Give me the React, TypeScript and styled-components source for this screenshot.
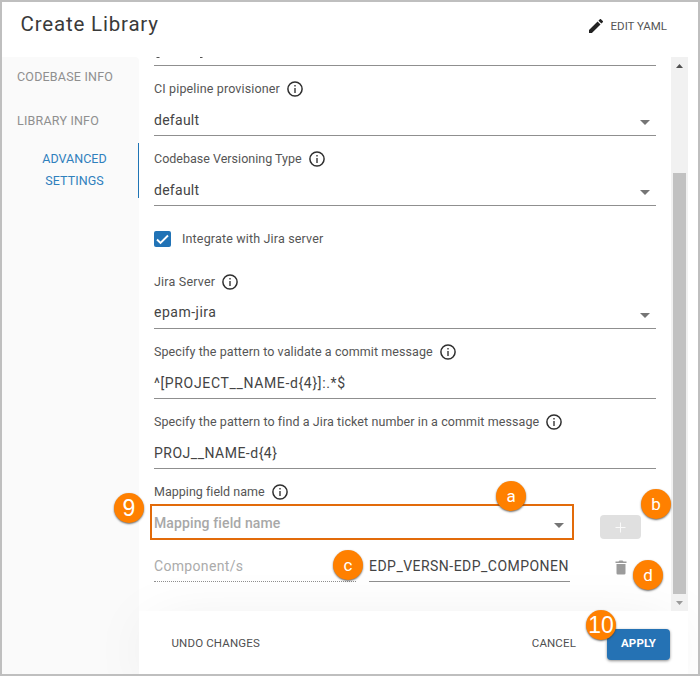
import React from 'react';
import styled, { createGlobalStyle } from 'styled-components';

const Global = createGlobalStyle`
  * { box-sizing: border-box; }
  body { margin: 0; background: #fff; font-family: Roboto, "Liberation Sans", sans-serif; }
`;

const Frame = styled.div`
  position: relative;
  width: 700px;
  height: 676px;
  border: 2px solid #bfbfbf;
  background: #fff;
  display: flex;
  flex-direction: column;
  overflow: hidden;
`;

const Text = styled.span<{ $ls?: number }>`
  letter-spacing: ${p => p.$ls ?? 0}px;
  white-space: nowrap;
`;

const Header = styled.header`
  height: 55px;
  flex: none;
  display: flex;
  justify-content: space-between;
  padding: 0 31px 0 18.5px;
`;

const Title = styled.h1`
  margin: 0;
  padding-top: 9px;
  font-size: 20.5px;
  line-height: 26px;
  font-weight: 400;
  color: #3a3a3a;
`;

const EditButton = styled.button`
  border: 0;
  padding: 0;
  height: 48px;
  background: none;
  display: flex;
  align-items: center;
  gap: 8px;
  font: 400 11.5px Roboto, sans-serif;
  color: #555;
`;

const Body = styled.div`
  flex: 1;
  display: flex;
  min-height: 0;
`;

const Sidebar = styled.nav`
  width: 137px;
  flex: none;
  background: #fafafa;
  border-top-right-radius: 4px;
`;

const Tab = styled.div<{ $active?: boolean }>`
  height: ${p => (p.$active ? 55 : 44)}px;
  margin-top: ${p => (p.$active ? -2 : 0)}px;
  padding: ${p => (p.$active ? '5px 0 0 9px' : '9px 0 0 15px')};
  display: flex;
  flex-direction: column;
  align-items: ${p => (p.$active ? 'center' : 'flex-start')};
  border-right: ${p => (p.$active ? '1px solid #1f74b5' : '0')};
  color: ${p => (p.$active ? '#2f80bd' : '#8f8f8f')};
  font-size: 12.5px;
  line-height: 22px;
`;

const Main = styled.main`
  width: 549px;
  flex: none;
  display: flex;
  flex-direction: column;
`;

const ScrollArea = styled.div`
  height: 554px;
  flex: none;
  display: flex;
`;

const Form = styled.div`
  width: 532px;
  padding-left: 15px;
`;

const Clipped = styled.div`
  width: 502px;
  height: 9px;
  border-bottom: 1px solid #8f8f8f;
  display: flex;
  svg { display: block; }
`;

const FieldBox = styled.div`
  width: 502px;
  height: 70px;
  border-bottom: 1px solid #8f8f8f;
`;

const Label = styled.div`
  display: flex;
  align-items: center;
  gap: 7px;
  height: 35px;
  padding-top: 11px;
  padding-bottom: 1px;
  font-size: 12.5px;
  line-height: 22px;
  color: #555;
`;

const Value = styled.div<{ $lift?: number }>`
  display: flex;
  justify-content: space-between;
  padding: ${p => 11 - (p.$lift ?? 0)}px 6px 0 0;
  font-size: 14px;
  line-height: 17px;
  color: #444;
`;

const Arrow = styled.span<{ $drop?: number }>`
  width: 0;
  height: 0;
  margin-top: ${p => p.$drop ?? 8}px;
  border: 5px solid transparent;
  border-top: 5px solid #757575;
  border-bottom: 0;
`;

const CheckRow = styled.label`
  height: 53px;
  padding-top: 12px;
  padding-bottom: 1px;
  display: flex;
  align-items: center;
  gap: 11px;
  font-size: 12.5px;
  color: #555;
`;

const Tick = styled.span`
  width: 17px;
  height: 16px;
  position: relative;
  top: 1px;
  border-radius: 2px;
  background: #2173b6;
  display: grid;
  place-items: center;
`;

const MappingRow = styled.div`
  display: flex;
  align-items: flex-end;
  gap: 26px;
  margin-left: -4px;
`;

const Select = styled.div`
  width: 424px;
  height: 36px;
  border: 2px solid #e26b0a;
  padding: 0 8px 0 2px;
  display: flex;
  justify-content: space-between;
  font-size: 14px;
  font-weight: 500;
  line-height: 34px;
  color: #a8a8a8;
`;

const AddButton = styled.button`
  width: 41px;
  height: 24px;
  margin-bottom: 1px;
  padding: 0;
  border: 0;
  border-radius: 4px;
  background: #e0e0e0;
  display: grid;
  place-items: center;
`;

const PairRow = styled.div`
  display: flex;
  height: 42px;
  gap: 14px;
`;

const Input = styled.div<{ $disabled?: boolean }>`
  width: ${p => (p.$disabled ? 202 : 201)}px;
  margin-right: ${p => (p.$disabled ? -1 : 0)}px;
  border-bottom: 1px ${p => (p.$disabled ? 'dotted' : 'solid')} #8f8f8f;
  padding: 18px 0 0;
  font-size: 14px;
  line-height: 17px;
  color: ${p => (p.$disabled ? '#ababab' : '#444')};
`;

const TrashButton = styled.button`
  border: 0;
  padding: 0;
  background: none;
  width: 12px;
  margin: 20px 0 0 31px;
  align-self: flex-start;
  svg { display: block; }
`;

const Scrollbar = styled.div`
  width: 17px;
  background: #f1f1f1;
  display: flex;
  flex-direction: column;
  align-items: center;
  position: relative;
  z-index: 1;
`;

const ScrollEnd = styled.div`
  height: 17px;
  flex: none;
  display: grid;
  place-items: center;
`;

const Thumb = styled.div`
  width: 13px;
  height: 421px;
  margin-top: 99px;
  background: #c1c1c1;
`;

const Footer = styled.footer`
  flex: 1;
  position: relative;
  background: #fff;
  box-shadow: 0 8px 64px -14px rgba(0, 0, 0, 0.13);
  display: flex;
  align-items: center;
  padding: 1px 18px 0 32.5px;
  font-size: 11.5px;
  color: #505050;
`;

const Cancel = styled.span`
  margin: 0 31px 0 auto;
`;

const Apply = styled.button`
  width: 63px;
  height: 31px;
  margin-top: 3px;
  padding: 0 0 3px;
  border: 0;
  border-radius: 4px;
  background: #2572b4;
  color: #fff;
  font: 700 11.5px Roboto, sans-serif;
  box-shadow: 0 1px 3px rgba(0, 0, 0, 0.45);
`;

const Badge = styled.span<{ $x: number; $y: number; $num?: boolean }>`
  position: absolute;
  z-index: 2;
  left: ${p => p.$x - 17}px;
  top: ${p => p.$y - 17}px;
  width: 30px;
  height: 30px;
  border-radius: 50%;
  background: #ff8000;
  box-shadow: 0 1px 2px rgba(60, 60, 60, 0.75);
  color: #fff;
  display: flex;
  align-items: center;
  justify-content: center;
  font: 400 ${p => (p.$num ? 23 : 17)}px ${p => (p.$num ? '"Liberation Sans"' : 'Roboto')}, sans-serif;
`;

const InfoIcon = () => (
  <svg width="16" height="16" viewBox="0 0 16 16" fill="none">
    <circle cx="8" cy="8" r="7.1" stroke="#2f2f2f" strokeWidth="1.5" />
    <path d="M8 7v5M8 4v1.6" stroke="#444" strokeWidth="1.5" />
  </svg>
);

const Triangle = ({ up, color }: { up?: boolean; color: string }) => (
  <svg width="7" height="4" viewBox="0 0 7 4">
    <path d={up ? 'M0 4 3.5 0 7 4z' : 'M0 0h7L3.5 4z'} fill={color} />
  </svg>
);

type FieldProps = { label: string; ls: number; value: string; vls: number; select?: boolean; lift?: number };

const Field = ({ label, ls, value, vls, select, lift }: FieldProps) => (
  <FieldBox>
    <Label>
      <Text $ls={ls}>{label}</Text>
      <InfoIcon />
    </Label>
    <Value $lift={lift}>
      <Text $ls={vls}>{value}</Text>
      {select && <Arrow $drop={8 + (lift ?? 0)} />}
    </Value>
  </FieldBox>
);

export default function App() {
  return (
    <>
      <Global />
      <Frame>
        <Header>
          <Title><Text $ls={0.82}>Create Library</Text></Title>
          <EditButton>
            <svg width="14" height="14" viewBox="3 3 18 18" fill="#222">
              <path d="M3 17.25V21h3.75L17.81 9.94l-3.75-3.75zM20.71 7.04a1 1 0 0 0 0-1.41l-2.34-2.34a1 1 0 0 0-1.41 0l-1.83 1.83 3.75 3.75z" />
            </svg>
            <Text $ls={-0.03}>EDIT YAML</Text>
          </EditButton>
        </Header>
        <Body>
          <Sidebar>
            <Tab><Text $ls={0.2}>CODEBASE INFO</Text></Tab>
            <Tab><Text $ls={0.2}>LIBRARY INFO</Text></Tab>
            <Tab $active>
              <Text $ls={0.03}>ADVANCED</Text>
              <Text $ls={0.08}>SETTINGS</Text>
            </Tab>
          </Sidebar>
          <Main>
            <ScrollArea>
              <Form>
                <Clipped>
                  <svg width="60" height="2" viewBox="0 0 60 2" stroke="#555">
                    <path d="M2.500 .5h3M46 .5h2.500" />
                  </svg>
                </Clipped>
                <Field label="CI pipeline provisioner" ls={0.14} value="default" vls={0.27} select />
                <Field label="Codebase Versioning Type" ls={0.01} value="default" vls={0.27} select />
                <CheckRow>
                  <Tick>
                    <svg width="13" height="11" viewBox="0 0 13 11" fill="none">
                      <path d="M1 5.500 4.500 9 12 1.500" stroke="#fff" strokeWidth="1.900" />
                    </svg>
                  </Tick>
                  <Text $ls={0.16}>Integrate with Jira server</Text>
                </CheckRow>
                <Field label="Jira Server" ls={0.2} value="epam-jira" vls={0.5} select lift={1} />
                <Field label="Specify the pattern to validate a commit message" ls={0.08} value="^[PROJECT__NAME-d{4}]:.*$" vls={0.65} />
                <Field label="Specify the pattern to find a Jira ticket number in a commit message" ls={0.09} value="PROJ__NAME-d{4}" vls={0.5} />
                <Label>
                  <Text $ls={0.02}>Mapping field name</Text>
                  <InfoIcon />
                </Label>
                <MappingRow>
                  <Select>
                    <Text $ls={0.12}>Mapping field name</Text>
                    <Arrow $drop={17} />
                  </Select>
                  <AddButton>
                    <svg width="11" height="11" viewBox="0 0 11 11">
                      <path d="M5.500 .5v10M.5 5.500h10" stroke="#fafafa" strokeWidth="1" />
                    </svg>
                  </AddButton>
                </MappingRow>
                <PairRow>
                  <Input $disabled><Text $ls={0.33}>Component/s</Text></Input>
                  <Input><Text $ls={0.47}>EDP_VERSN-EDP_COMPONEN</Text></Input>
                  <TrashButton>
                    <svg width="12" height="15" viewBox="0 0 12 15" fill="#9b9b9b">
                      <path d="M.5 1.500h3L4.500 .5h3l1 1h3V3H.5zM1.500 4h9v9.200a1.300 1.300 0 0 1-1.300 1.300H2.800a1.300 1.300 0 0 1-1.300-1.300z" />
                    </svg>
                  </TrashButton>
                </PairRow>
              </Form>
              <Scrollbar>
                <ScrollEnd><Triangle up color="#505050" /></ScrollEnd>
                <Thumb />
                <ScrollEnd><Triangle color="#9a9a9a" /></ScrollEnd>
              </Scrollbar>
            </ScrollArea>
            <Footer>
              <Text $ls={0.15}>UNDO CHANGES</Text>
              <Cancel><Text $ls={0.14}>CANCEL</Text></Cancel>
              <Apply><Text $ls={0.1}>APPLY</Text></Apply>
            </Footer>
          </Main>
        </Body>
        <Badge $x={129} $y={508} $num>9</Badge>
        <Badge $x={511} $y={496}>a</Badge>
        <Badge $x={656} $y={504}>b</Badge>
        <Badge $x={348} $y={565}>c</Badge>
        <Badge $x={648} $y={575}>d</Badge>
        <Badge $x={601} $y={625} $num>10</Badge>
      </Frame>
    </>
  );
}
